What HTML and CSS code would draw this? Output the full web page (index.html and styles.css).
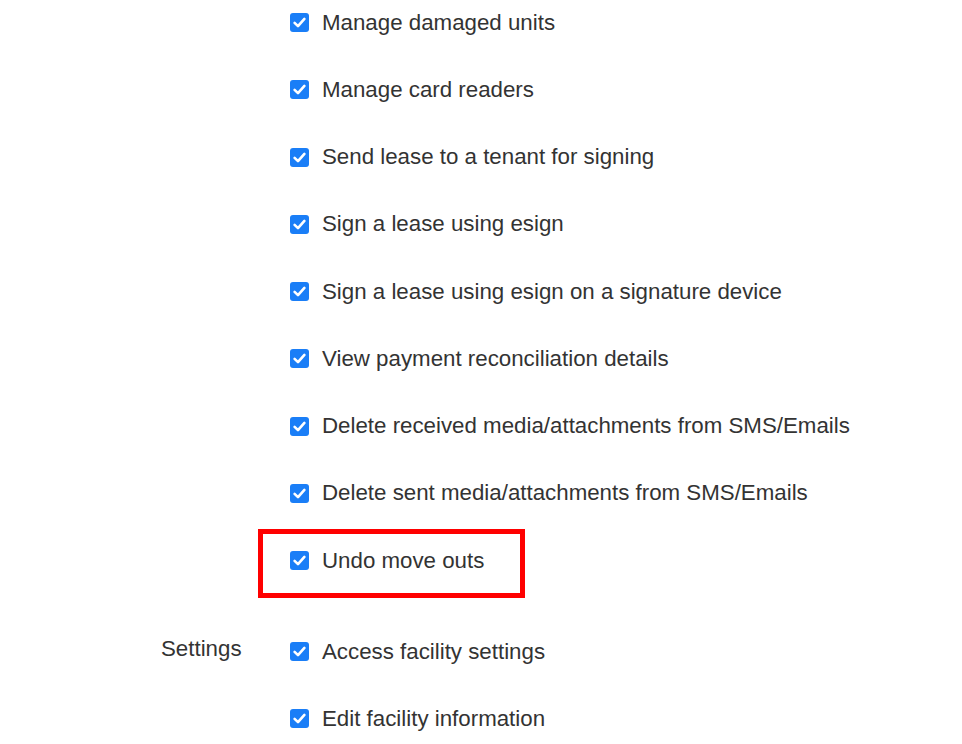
FILE: index.html
```html
<!DOCTYPE html>
<html lang="en">
<head>
  <meta charset="UTF-8" />
  <meta name="viewport" content="width=device-width, initial-scale=1.0" />
  <title>Role permissions</title>
  <link rel="stylesheet" href="styles.css">
</head>
<body>
  <div class="permissions">
    <div class="section">
      <div class="section-label"></div>
      <ul class="perm-list">
        <li class="perm"><span class="check"><svg viewBox="0 0 19 19"><path d="M4.6 9.8 L8 13.2 L14.4 5.9" /></svg></span>Manage damaged units</li>
        <li class="perm"><span class="check"><svg viewBox="0 0 19 19"><path d="M4.6 9.8 L8 13.2 L14.4 5.9" /></svg></span>Manage card readers</li>
        <li class="perm"><span class="check"><svg viewBox="0 0 19 19"><path d="M4.6 9.8 L8 13.2 L14.4 5.9" /></svg></span>Send lease to a tenant for signing</li>
        <li class="perm"><span class="check"><svg viewBox="0 0 19 19"><path d="M4.6 9.8 L8 13.2 L14.4 5.9" /></svg></span>Sign a lease using esign</li>
        <li class="perm"><span class="check"><svg viewBox="0 0 19 19"><path d="M4.6 9.8 L8 13.2 L14.4 5.9" /></svg></span>Sign a lease using esign on a signature device</li>
        <li class="perm"><span class="check"><svg viewBox="0 0 19 19"><path d="M4.6 9.8 L8 13.2 L14.4 5.9" /></svg></span>View payment reconciliation details</li>
        <li class="perm"><span class="check"><svg viewBox="0 0 19 19"><path d="M4.6 9.8 L8 13.2 L14.4 5.9" /></svg></span>Delete received media/attachments from SMS/Emails</li>
        <li class="perm"><span class="check"><svg viewBox="0 0 19 19"><path d="M4.6 9.8 L8 13.2 L14.4 5.9" /></svg></span>Delete sent media/attachments from SMS/Emails</li>
        <li class="perm highlighted"><span class="check"><svg viewBox="0 0 19 19"><path d="M4.6 9.8 L8 13.2 L14.4 5.9" /></svg></span>Undo move outs</li>
      </ul>
    </div>

    <div class="section">
      <div class="section-label">Settings</div>
      <ul class="perm-list">
        <li class="perm"><span class="check"><svg viewBox="0 0 19 19"><path d="M4.6 9.8 L8 13.2 L14.4 5.9" /></svg></span>Access facility settings</li>
        <li class="perm"><span class="check"><svg viewBox="0 0 19 19"><path d="M4.6 9.8 L8 13.2 L14.4 5.9" /></svg></span>Edit facility information</li>
      </ul>
    </div>
  </div>
</body>
</html>
```

FILE: styles.css
```css
*, *::before, *::after {
  box-sizing: border-box;
  margin: 0;
  padding: 0;
}

body {
  background: #ffffff;
  color: #333333;
  font-family: "Liberation Sans", Arial, Helvetica, sans-serif;
  font-size: 22.3px;
  overflow: hidden;
}

.permissions {
  padding: 10px 0 0 161px;
}

.section {
  display: grid;
  grid-template-columns: 129px 1fr;
  margin-bottom: 23.75px;
}

.section-label {
  line-height: 20px;
}

.perm-list {
  list-style: none;
}

.perm {
  display: flex;
  align-items: center;
  height: 25px;
  margin-bottom: 42.25px;
  white-space: nowrap;
  position: relative;
}

.check {
  width: 19px;
  height: 19px;
  margin-right: 13px;
  border-radius: 3px;
  background: #1a7ef7;
  flex-shrink: 0;
  display: flex;
}

.check svg {
  width: 19px;
  height: 19px;
}

.check path {
  fill: none;
  stroke: #ffffff;
  stroke-width: 2.6;
  stroke-linecap: round;
  stroke-linejoin: round;
}

/* red annotation box drawn over the row */
.highlighted::after {
  content: "";
  position: absolute;
  top: -19px;
  left: -32px;
  width: 267px;
  height: 69px;
  border: 5px solid #ff0000;
}
```
